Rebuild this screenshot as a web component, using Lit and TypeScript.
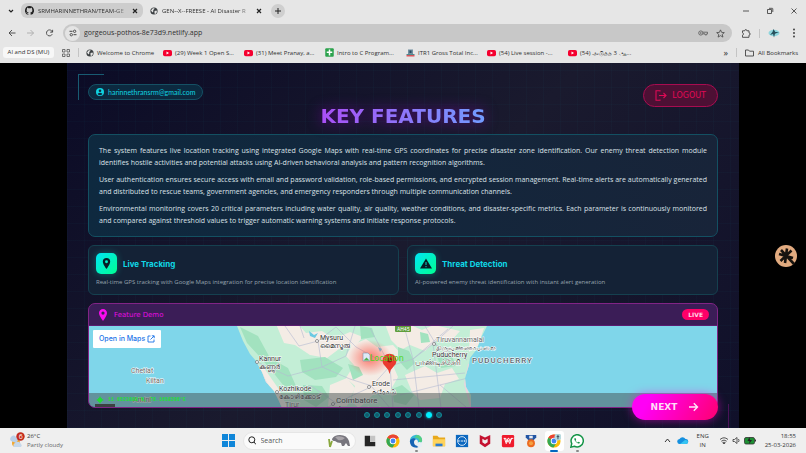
import { LitElement, html, css, svg } from "lit";
import { customElement } from "lit/decorators.js";
import { classMap } from "lit/directives/class-map.js";

const reset = css`
  * { box-sizing: border-box; }
  button, input, a { font: inherit; color: inherit; margin: 0; padding: 0; border: 0; background: none; text-decoration: none; outline: none; }
  button { display: inline-flex; align-items: center; justify-content: center; cursor: pointer; }
  svg { display: block; flex: none; }
  h1, h2, p { margin: 0; }
`;

const globe = html`<svg width="8" height="8" viewBox="0 0 16 16"><circle cx="8" cy="8" r="7.2" fill="#3c4043"/><path d="M2 7l3-4 4-1-1 3-2 1 1 2-2 3zM9 8l4-1 1 3-3 4-2-1z" fill="#e6e6e6"/></svg>`;
const youtube = html`<svg width="9" height="8" viewBox="0 0 18 16"><rect x="0" y="2" width="18" height="12.5" rx="3.5" fill="#f5002f"/><path d="M7 5.2v6l5-3z" fill="#fff"/></svg>`;
const sheets = html`<svg width="9" height="9" viewBox="0 0 18 18"><rect x=".5" y=".5" width="17" height="17" rx="2" fill="#2ba24c"/><path d="M9 3v12M3.500 8.500h11" stroke="#fff" stroke-width="3"/></svg>`;
const taxes = html`<svg width="9" height="8" viewBox="0 0 18 16"><path d="M4 1h10v9H4z" fill="#6f8fa0"/><path d="M7 3h4v5H7z" fill="#274b63"/><path d="M1 10h16v2H1z" fill="#4d8b8f"/><path d="M1 12h16v3H1z" fill="#d8545a"/></svg>`;
const tabClose = html`<svg width="8" height="8" viewBox="0 0 8 8"><path d="M2 2l4 4M6 2l-4 4" stroke="#222" stroke-width="1.200"/></svg>`;

const bookmarks = [
  { icon: globe, label: "Welcome to Chrome", first: true },
  { icon: youtube, label: "(29) Week 1 Open S..." },
  { icon: youtube, label: "(31) Meet Pranay, a..." },
  { icon: sheets, label: "Intro to C Program..." },
  { icon: taxes, label: "ITR1 Gross Total Inc..." },
  { icon: youtube, label: "(54) Live session -..." },
  { icon: youtube, label: "(54) அடுத்த 3 ஆ..." },
];

@customElement("browser-bar")
class BrowserBar extends LitElement {
  static styles = [reset, css`
    :host { display: block; background: #e6e6e6; color: #303030; font: 6px/10px "Open Sans", "Noto Sans", sans-serif; }
    .tabs { display: flex; align-items: center; height: 21px; padding: 0 8px 0 7px; }
    .menu { width: 8px; margin-right: 6px; }
    .tab { display: flex; align-items: center; gap: 4px; height: 15px; width: 122px; padding: 0 4px; border-radius: 6px; }
    .tab.idle { background: #cdcdcd; }
    .tab.current { padding: 0 2px 0 7px; }
    .tab .label { flex: 1; justify-content: flex-start; overflow: hidden; white-space: nowrap; min-width: 0; mask-image: linear-gradient(90deg, #000 84%, #0003); }
    .add { width: 14px; height: 14px; border-radius: 50%; background: #cfcfcf; margin-left: 6px; }
    .grow { flex: 1; }
    .window { display: flex; gap: 16px; }
    .tools { display: flex; align-items: center; height: 24px; padding: 0 8px; }
    .nav { display: flex; gap: 10px; padding-right: 9px; }
    .address { flex: 1; display: flex; align-items: center; height: 18px; border-radius: 9px; background: #c8c8c8; padding: 0 7px 0 2px; }
    .site { width: 15px; height: 15px; border-radius: 50%; background: #e4e4e4; }
    .address input { flex: 1; min-width: 0; margin: 0 4px; font-size: 7px; }
    .pair { display: flex; gap: 8px; }
    .right { display: flex; align-items: center; gap: 8px; padding-left: 9px; }
    .sep { width: 1px; height: 9px; background: #c4c4c4; }
    .marks { display: flex; align-items: center; height: 18px; padding: 0 8px 3px 3px; white-space: nowrap; }
    .chip { display: block; width: 51px; text-align: center; background: #f7f7f7; border-radius: 3px; height: 11px; }
    .apps { margin: 0 8px; }
    .mark { display: flex; align-items: center; gap: 3px; width: 81px; }
    .mark.first { width: 77px; margin-left: 7px; }
    .all { display: flex; align-items: center; gap: 4px; margin-left: 8px; }
    .more { margin-right: 8px; font-size: 9px; }
  `];
  render() {
    return html`
      <div class="tabs">
        <button class="menu" aria-label="Search tabs"><svg width="8" height="8" viewBox="0 0 8 8"><path d="M2 3l2 2 2-2" fill="none" stroke="#222" stroke-width="1.200"/></svg></button>
        <div class="tab idle">
          <svg width="9" height="9" viewBox="0 0 16 16"><path fill="#222" d="M8 0a8 8 0 0 0-2.500 15.600c.4.100.5-.2.5-.4v-1.500c-2.200.5-2.700-.9-2.700-.9-.4-.9-.9-1.200-.9-1.200-.7-.5.1-.5.1-.5.8.1 1.200.8 1.200.8.700 1.300 1.900.9 2.300.7.100-.5.3-.9.5-1.100-1.800-.2-3.600-.9-3.600-4 0-.8.3-1.600.8-2.100-.1-.2-.4-1 .1-2.100 0 0 .7-.2 2.200.8a7.500 7.500 0 0 1 4 0c1.500-1 2.200-.8 2.200-.8.4 1.100.2 1.900.1 2.100.5.500.8 1.300.8 2.100 0 3.100-1.900 3.800-3.700 4 .3.300.6.800.6 1.500v2.200c0 .2.100.5.500.4A8 8 0 0 0 8 0z"/></svg>
          <button class="label">SRMHARINNETHRAN/TEAM-GE</button>
          <button aria-label="Close tab">${tabClose}</button>
        </div>
        <div class="tab current">
          ${globe}
          <button class="label">GEN--X--FREESE - AI Disaster R</button>
          <button aria-label="Close tab">${tabClose}</button>
        </div>
        <button class="add" aria-label="New tab"><svg width="8" height="8" viewBox="0 0 8 8"><path d="M4 1v6M1 4h6" stroke="#222"/></svg></button>
        <span class="grow"></span>
        <div class="window">
          <button aria-label="Minimise"><svg width="8" height="8" viewBox="0 0 8 8"><path d="M1 4h6" stroke="#333" stroke-width=".8"/></svg></button>
          <button aria-label="Restore"><svg width="8" height="8" viewBox="0 0 8 8"><path d="M1.500 2.500h4v4h-4zM3 1.300h3.200q.6 0 .6.600V5" fill="none" stroke="#333" stroke-width=".8"/></svg></button>
          <button aria-label="Close"><svg width="8" height="8" viewBox="0 0 8 8"><path d="M1.500 1.500l5 5M6.500 1.500l-5 5" stroke="#333" stroke-width=".8"/></svg></button>
        </div>
      </div>
      <div class="tools">
        <div class="nav">
          <button aria-label="Back"><svg width="8" height="8" viewBox="0 0 8 8"><path d="M7.500 4H1M4 1L1 4l3 3" fill="none" stroke="#444" stroke-width=".9"/></svg></button>
          <button aria-label="Forward"><svg width="9" height="8" viewBox="0 0 8 8"><path d="M.5 4H7M4 1l3 3-3 3" fill="none" stroke="#aaa" stroke-width=".9"/></svg></button>
          <button aria-label="Reload"><svg width="9" height="8" viewBox="0 0 9 8"><path d="M7.200 5.200A3 3 0 1 1 6.800 2L7.500 3M7.600.8V3.200H5.200" fill="none" stroke="#444" stroke-width=".9"/></svg></button>
        </div>
        <div class="address">
          <button class="site" aria-label="Site information"><svg width="8" height="8" viewBox="0 0 8 8"><path d="M.5 2.300h3M4.500 5.700h3" stroke="#444"/><circle cx="5.600" cy="2.300" r="1.200" fill="none" stroke="#444" stroke-width=".9"/><circle cx="2.300" cy="5.700" r="1.200" fill="none" stroke="#444" stroke-width=".9"/></svg></button>
          <input aria-label="Address" value="gorgeous-pothos-8e73d9.netlify.app">
          <div class="pair">
            <button aria-label="Passwords"><svg width="10" height="8" viewBox="0 0 10 8"><circle cx="2.800" cy="4" r="2.100" fill="none" stroke="#555" stroke-width=".8"/><circle cx="2.800" cy="4" r=".8" fill="#555"/><path d="M5 3.200h4.500v1.600h-.8v1.100H7V4.800H5" fill="none" stroke="#555" stroke-width=".8"/></svg></button>
            <button aria-label="Bookmark"><svg width="9" height="9" viewBox="0 0 16 16"><path d="M8 1.500l2 4.500 4.800.4-3.700 3.200 1.200 4.800L8 11.800l-4.300 2.600 1.200-4.800L1.200 6.400 6 6z" fill="none" stroke="#444" stroke-width="1.400"/></svg></button>
          </div>
        </div>
        <div class="right">
          <button aria-label="Extensions"><svg width="10" height="9" viewBox="0 0 10 9"><path d="M1.500 1.800h2.200q.2-1.300 1.100-1.300t1.100 1.300H8v2.100q1.300.2 1.300 1.100T8 6.100v2.200H1.500V6.200q1-.3 1-1.200t-1-1.200z" fill="none" stroke="#444" stroke-width=".9"/></svg></button>
          <span class="sep"></span>
          <button aria-label="Profile"><svg width="12" height="10" viewBox="0 0 12 10"><ellipse cx="6" cy="5" rx="5.500" ry="3.200" fill="#8fd6de"/><path d="M5.500 1l1.800 3L11 4 7 5.800 6 9.500 5 6 2 7l2.500-3z" fill="#27505c"/></svg></button>
          <button aria-label="Menu"><svg width="10" height="10" viewBox="0 0 10 10"><g fill="#333"><circle cx="6" cy="1.500" r=".9"/><circle cx="6" cy="5" r=".9"/><circle cx="6" cy="8.500" r=".9"/></g></svg></button>
        </div>
      </div>
      <div class="marks">
        <a class="chip" href="#">AI and DS (MU)</a>
        <svg class="apps" width="8" height="8" viewBox="0 0 8 8"><path d="M.5.5h2.500v2.500H.5zM5 .5h2.500v2.500H5zM.5 5h2.500v2.500H.5zM5 5h2.500v2.500H5z" fill="none" stroke="#555" stroke-width=".8"/></svg>
        <span class="sep"></span>
        ${bookmarks.map((b) => html`<a href="#" class=${classMap({ mark: true, first: !!b.first })}>${b.icon}<span>${b.label}</span></a>`)}
        <span class="grow"></span>
        <button class="more" aria-label="More bookmarks">»</button>
        <span class="sep"></span>
        <a class="all" href="#"><svg width="9" height="8" viewBox="0 0 9 8"><path d="M.5 1h3l1 1.200h4V7h-8z" fill="none" stroke="#444" stroke-width=".9"/></svg>All Bookmarks</a>
      </div>`;
  }
}

const places = [
  { x: 320, y: 340, name: "Mysuru", local: "മൈസൂരു", dot: [317, 341] },
  { x: 259, y: 361, name: "Kannur", local: "കണ്ണൂർ", dot: [257, 362] },
  { x: 279, y: 391, name: "Kozhikode", local: "കോഴിക്കോട്", dot: [277, 392] },
  { x: 372, y: 386, name: "Erode", local: "ஈரோடு", dot: [369, 387] },
  { x: 436, y: 342, name: "Tiruvannamalai", local: "திருவண்ணாமலை", dot: [434, 344], soft: true },
];

@customElement("feature-map")
class FeatureMap extends LitElement {
  static styles = [reset, css`
    :host { display: block; position: relative; overflow: hidden; background: #7fd6ea; border-radius: 0 0 6px 6px; }
    .map { width: 100%; height: 81px; }
    text { font-family: Roboto, "Noto Sans", sans-serif; font-size: 7px; fill: #333; stroke: #fff; stroke-width: 1px; paint-order: stroke; }
    .soft { fill: #666; }
    .city { font-size: 8px; }
    .region { fill: #5c6670; font-size: 8px; font-weight: 500; letter-spacing: 1px; }
    .road { fill: #fff; font-size: 5px; stroke: none; }
    .alt { fill: #4fd61c; font-family: "DejaVu Sans", sans-serif; font-size: 8px; stroke: none; }
    .open { position: absolute; left: 4px; top: 4px; height: 18px; padding: 0 6px; display: flex; align-items: center; gap: 2px; background: #fff; border-radius: 1px; color: #1a73e8; font: 500 7px/18px Inter, sans-serif; }
    .coords { position: absolute; left: 0; right: 0; bottom: 0; height: 14px; padding-left: 7px; display: flex; align-items: center; gap: 4px; background: #46505080; color: #20e035; font: bold 5px/14px "Liberation Mono", monospace; }
  `];
  render() {
    return html`
      <svg class="map" viewBox="89 326 628 81" preserveAspectRatio="xMidYMid slice" role="img" aria-label="Map of southern India">
        <defs>
          <radialGradient id="glow"><stop offset="0" stop-color="#ff2a1a" stop-opacity=".6"/><stop offset="1" stop-color="#ff2a1a" stop-opacity="0"/></radialGradient>
          <clipPath id="land"><path d="M237 326L243 341 250 354 256 361 262 372 266 382 274 391 279 401 282 408H471L471 395 466 387 465 378 469 365 470 358 477 349 481 338 487 326z"/></clipPath>
        </defs>
        <g clip-path="url(#land)">
          <rect x="230" y="320" width="270" height="90" fill="#c3eed6"/>
          <g fill="#f4ece5">
            <path d="M276 324l22 0 8 9 16-2 12 8 16-7 13 5-8 9-16 3-12 9-17-3-15-10-11-2z"/>
            <path d="M352 345l14-6 11 8 16-2 8 9-9 9 6 14-8 14-17 4-14 13-8-7 4-15-9-8 8-13-8-9z"/>
            <path d="M385 324l23 0 14 6 12-5 26 6-8 9-16 1-11 10-15-6-9 5-10-10z"/>
            <path d="M405 375l20-9 12 7 15-5 7 11-14 5-5 14-20 2-8-8z"/>
            <path d="M255 368l9 0 14 20 10 20-10 0z"/><path d="M330 385l17-7 8 10-8 18-19 1z"/>
            <path d="M470 330l14-2-6 18-9 6z"/>
          </g>
          <g fill="#a2e2bf">
            <path d="M240 327l18 9 12 22 18 10 8 18-9 4-15-19-13-15-12-13z"/>
            <path d="M300 360l25-3 18 11-7 9-21 3-13-8z"/><path d="M348 364l11 3 4 8-10 5z"/>
            <path d="M398 347l11 4 6 12-8 7-9-10z"/><path d="M360 326l12 2 3 9-14 2z"/>
            <path d="M303 385l19 1 7 11-13 10-12-7z"/><path d="M436 353l16 3 4 10-15 2z"/><path d="M392 389l10-4 12 10-8 10-12-3z"/><path d="M420 332l8 2 2 8-9 1z"/>
          </g>
          <g fill="none" stroke="#b3bad2" stroke-width=".6">
            <path d="M285 326l14 20 19-5 18-14M318 341l4 26 28 12 22 7M336 327l20 20 34 19 23-7 35-30M390 366l-19 21-35 16-10 5M372 387l18 21M390 366l3 42M413 359l20-15 34 16M413 359l6 49M433 344l20-18M413 359l-9-33M433 344l8 64M393 380l72-7M400 395l68-17M257 362l31 14 34-9M277 392l34-6 25 17M390 366l-20-38M425 326l12 20M440 385l26 22M355 326l-9 30-24 11M300 326l4 12"/>
          </g>
          <path d="M309 331l5 4 4-2-3 5-5-2zM378 347l4 2-2 3z" fill="#6bc9e2"/>
          <g fill="none" stroke="#e7d5df" stroke-width="2"><path d="M257 364l8 17 16 26M469 364l-4 20 6 23"/></g>
        </g>
        <rect x="395" y="325" width="16" height="7" rx="1" fill="#5f9d3c"/><text class="road" x="397" y="331">AH45</text>
        <ellipse cx="370" cy="358" rx="22" ry="18" fill="url(#glow)"/>
        ${places.map((p) => svg`
          <circle cx=${p.dot[0]} cy=${p.dot[1]} r="1.500" fill="#fff" stroke="#555" stroke-width=".6"/>
          <text class=${p.soft ? "soft" : ""} x=${p.x} y=${p.y}>${p.name}</text>
          <text class=${p.soft ? "soft" : ""} x=${p.x} y=${p.y + 8}>${p.local}</text>`)}
        <text class="soft" x="131" y="373">Chetlat</text><text class="soft" x="146" y="383">Kiltan</text><text class="soft" x="133" y="402">Amini</text>
        <text x="432" y="357">Puducherry</text><text class="city" x="415" y="365">பாண்டிச்சேரி</text>
        <text class="region" x="472" y="363">PUDUCHERRY</text>
        <circle cx="333" cy="404" r="1.500" fill="#fff" stroke="#555" stroke-width=".6"/>
        <text class="city" x="336" y="403">Coimbatore</text><text x="336" y="411">கோயம்புத்தூர்</text><text class="soft" x="285" y="407">Tirur</text>
        <path d="M363 353h5l2 2v6h-7z" fill="#dfe9f7" stroke="#7f93ad" stroke-width=".6"/><path d="M363.500 360.500l3-3 3 3z" fill="#4fae4f"/>
        <path d="M389.500 374q-1-5-4.500-8a7 7 0 1 1 9 0q-3.500 3-4.500 8z" fill="#ea3a2f"/><circle cx="389.500" cy="360" r="2.500" fill="#a3180f"/>
        <text class="alt" x="370" y="361">Location</text>
        <path d="M95 404h20v4H95z" fill="#333"/>
      </svg>
      <a class="open" href="#">Open in Maps<svg width="8" height="8" viewBox="0 0 8 8"><path d="M3.500 1H1v6h6V4.500M4.800.8h2.400v2.400M7 1L3.500 4.500" fill="none" stroke="#1a73e8" stroke-width=".9"/></svg></a>
      <div class="coords"><svg width="8" height="8" viewBox="0 0 8 8"><path d="M4 0l1.200 2.800L8 4 5.200 5.200 4 8 2.800 5.200 0 4l2.800-1.200z" fill="#20dc35"/><circle cx="4" cy="4" r="2.300" fill="#20dc35"/></svg>11.6523888°N, 78.1658286°E</div>`;
  }
}

const chrome = svg`<circle cx="8" cy="8" r="7.500" fill="#fbbc05"/><path d="M8 8L1.500 4.200A7.500 7.500 0 0 1 14.500 4.200z" fill="#ea4335"/><path d="M8 8L1.500 4.200A7.500 7.500 0 0 0 7.500 15.500L11 9.800z" fill="#34a853"/><circle cx="8" cy="8" r="3.700" fill="#fff"/><circle cx="8" cy="8" r="2.800" fill="#4285f4"/>`;
const apps = [
  { name: "Task view", art: svg`<path d="M2 2h6v7h6v5H2z" fill="#262626"/><path d="M8 2h6v7H8z" fill="#c4c4c4"/>` },
  { name: "Chrome", art: chrome },
  { name: "Edge", running: true, art: svg`<path d="M1 9a7 7 0 0 1 14-2c0 3-3 4-5 3 1-2-1-4-3-4-3 0-5 2-6 3z" fill="#35b8d8"/><path d="M1 8c1-3 5-4 7-2-3 1-3 6 0 7 2 1 4 0 5-1-1 3-4 4-6 3.500C3 15 1 12 1 8z" fill="#1764b4"/><path d="M9 1c4 0 6 3 6 6 0 2-2 3-4 3 2-4-1-6-5-6z" fill="#53cf83"/><circle cx="12" cy="12" r="3" fill="#e6eef5"/>` },
  { name: "Files", art: svg`<path d="M1 2h5l2 2h7v10H1z" fill="#e8a91c"/><path d="M1 6h14v8H1z" fill="#ffd35a"/><path d="M4 11h8v3H4z" fill="#2c7bd1"/>` },
  { name: "Dell", art: svg`<rect x="1" y="1" width="14" height="14" fill="#0b68c0"/><circle cx="8" cy="8" r="5" fill="none" stroke="#fff" stroke-width=".9"/><path d="M4.500 7v2M6.500 8h3M11 7v2" stroke="#fff"/>` },
  { name: "McAfee", art: svg`<path d="M2 1l6 3 6-3v10l-6 4-6-4z" fill="#c41230"/><path d="M5 5.500l3 1.700 3-1.700v4L8 11.400 5 9.500z" fill="#eee"/>` },
  { name: "WPS", art: svg`<rect x="1" y="1" width="14" height="14" rx="1.500" fill="#ef1b2d"/><path d="M3 5h2.500l1 4L8 5h1l1.500 4 1-4H14M4 5l2 6 2-4 2 4 2-6" fill="none" stroke="#fff" stroke-width="1.100"/>` },
  { name: "Rewards", art: svg`<path d="M2 1h12v3l-4 4H6L2 4z" fill="#2356a4"/><path d="M6 2h4v3H6z" fill="#e7ecf4"/><circle cx="8" cy="10.500" r="4.500" fill="#ec6a20"/><circle cx="8" cy="10.500" r="2.300" fill="#f5a142"/>` },
  { name: "Chrome window", active: true, art: svg`${chrome}<circle cx="12.500" cy="3.500" r="4" fill="#b7dade"/><path d="M12.500 1v5M11 3h3" stroke="#345"/>` },
  { name: "WhatsApp", running: true, art: svg`<path d="M1 15l1-4A7 7 0 1 1 5 14z" fill="#fff" stroke="#159548" stroke-width="1.700"/><path d="M5.500 4.500q-1.300 1 0 3 1.500 2.500 3.700 3.300 2 .5 2.300-1l-2-1-.8.9q-1.500-.6-2.300-2.200l.7-.8-.9-2z" fill="#159548"/>` },
];

@customElement("task-bar")
class TaskBar extends LitElement {
  static styles = [reset, css`
    :host { display: grid; grid-template-columns: 1fr auto 1fr; align-items: center; height: 25px; padding: 0 10px; background: #efefef; color: #333; font: 6px/9px "Open Sans", "Noto Sans", sans-serif; }
    .weather { display: flex; align-items: center; gap: 2px; }
    .muted { color: #666; }
    .center { display: flex; align-items: center; padding-left: 4px; }
    .search { display: flex; align-items: center; width: 113px; height: 18px; border-radius: 9px; background: #fafafa; padding: 0 4px; margin: 0 3px 0 8px; border: 1px solid #e6e6e6; gap: 5px; }
    .search input { flex: 1; min-width: 0; font-size: 7px; }
    .search input::placeholder { color: #555; opacity: 1; }
    .app { width: 19px; height: 20px; margin: 0 2px; border-radius: 3px; position: relative; }
    .app.active { background: #fff; }
    .app.active::after, .app.running::after { content: ""; position: absolute; bottom: -1px; width: 3px; height: 2px; border-radius: 1px; background: #888; }
    .app.active::after { width: 8px; background: #0067c0; }
    .tray { display: flex; align-items: center; justify-content: flex-end; gap: 6px; text-align: right; }
    .lang { text-align: center; width: 16px; }
    .status { display: flex; gap: 3px; margin: 0 3px 0 2px; }
  `];
  render() {
    return html`
      <div class="weather">
        <svg width="15" height="17" viewBox="0 0 15 17"><circle cx="6" cy="11" r="4" fill="#f4a72c"/><path d="M1 9a3 3 0 0 1 5-4l2 3-2 3z" fill="#b9cfe8"/><path d="M4 15a2.500 2.500 0 0 1 1-4 3.500 3.500 0 0 1 6 1 2 2 0 0 1 0 3z" fill="#c5d7ea"/><circle cx="10.500" cy="4.500" r="4.200" fill="#c42b1c"/><text x="8.800" y="7" font-size="7" fill="#fff">6</text></svg>
        <div>26°C<div class="muted">Partly cloudy</div></div>
      </div>
      <div class="center">
        <button aria-label="Start"><svg width="13" height="13" viewBox="0 0 13 13"><path d="M0 0h6v6H0zM7 0h6v6H7zM0 7h6v6H0zM7 7h6v6H7z" fill="#0f86d9"/></svg></button>
        <label class="search">
          <svg width="8" height="9" viewBox="0 0 8 9"><circle cx="3.800" cy="3.800" r="3" fill="none" stroke="#222"/><path d="M6 6l2 2.500" stroke="#222"/></svg>
          <input placeholder="Search" aria-label="Search">
          <svg width="24" height="15" viewBox="0 0 24 15"><path d="M2 6l1 8M5 8l-2 6" stroke="#8aa83e" stroke-width="1.800"/><path d="M5 6q2-4 8-4 7 0 9 6l1 5h-2l-2-3-2 3h-2l-1-3q-4 0-6-2-3 0-3-2z" fill="#77757d"/><path d="M8 4q5-2 10 1-3 3-7 2z" fill="#a9a5aa"/></svg>
        </label>
        ${apps.map((a) => html`<button aria-label=${a.name} class=${classMap({ app: true, active: !!a.active, running: !!a.running })}><svg width="14" height="14" viewBox="0 0 16 16">${a.art}</svg></button>`)}
      </div>
      <div class="tray">
        <svg width="7" height="7" viewBox="0 0 7 7"><path d="M1 5l2.500-3L6 5" fill="none" stroke="#333"/></svg>
        <svg width="12" height="9" viewBox="0 0 12 9"><path d="M3 8a2.500 2.500 0 0 1-.5-5 3.500 3.500 0 0 1 6 0 2.500 2.500 0 0 1 .5 5z" fill="#1490df"/><path d="M3 8l5-4q3 0 3 2t-2 2z" fill="#36c4f2"/></svg>
        <div class="lang">ENG<br>IN</div>
        <div class="status">
          <svg width="10" height="9" viewBox="0 0 10 9"><path d="M1 3.500q4-3.500 8 0M2.300 5.200q2.700-2.300 5.400 0M3.700 6.700q1.300-1 2.600 0L5 8z" fill="none" stroke="#444" stroke-width=".9"/></svg>
          <svg width="9" height="9" viewBox="0 0 9 9"><path d="M1 3.500h1.500L5 1.500v6L2.500 5.500H1zM6.500 3q1 1.500 0 3" fill="none" stroke="#444" stroke-width=".9"/></svg>
          <svg width="12" height="9" viewBox="0 0 12 9"><rect x=".5" y="1.500" width="10" height="6.500" rx="1.500" fill="#1d8f33" stroke="#333" stroke-width=".8"/><path d="M11.500 3.500v2" stroke="#333"/><path d="M5.500 1l-2 4h2l-.5 3 3-4H6z" fill="#222"/></svg>
        </div>
        <div>18:55<br>25-03-2026</div>
      </div>`;
  }
}

const pin = (size: number, color: string) => html`<svg width=${size} height=${size} viewBox="0 0 12 12"><path fill=${color} fill-rule="evenodd" d="M6 0a4 4 0 0 1 4 4.100C10 7 6 12 6 12S2 7 2 4.100A4 4 0 0 1 6 0zm0 2.500a1.600 1.600 0 1 0 0 3.200 1.600 1.600 0 0 0 0-3.200z"/></svg>`;

const cards = [
  { title: "Live Tracking", text: "Real-time GPS tracking with Google Maps integration for precise location identification", icon: pin(11, "#061c26") },
  { title: "Threat Detection", text: "AI-powered enemy threat identification with instant alert generation", icon: html`<svg width="12" height="11" viewBox="0 0 12 11"><path d="M6 .5L12 10.500H0z" fill="#061c26"/><path d="M6 4v3M6 8v1.200" stroke="#08d5c4"/></svg>` },
];
const paragraphs = [
  "The system features live location tracking using integrated Google Maps with real-time GPS coordinates for precise disaster zone identification. Our enemy threat detection module identifies hostile activities and potential attacks using AI-driven behavioral analysis and pattern recognition algorithms.",
  "User authentication ensures secure access with email and password validation, role-based permissions, and encrypted session management. Real-time alerts are automatically generated and distributed to rescue teams, government agencies, and emergency responders through multiple communication channels.",
  "Environmental monitoring covers 20 critical parameters including water quality, air quality, weather conditions, and disaster-specific metrics. Each parameter is continuously monitored and compared against threshold values to trigger automatic warning systems and initiate response protocols.",
];

@customElement("app-root")
class AppRoot extends LitElement {
  static styles = [reset, css`
    :host { display: flex; flex-direction: column; min-height: 100vh; font-family: "Open Sans", Roboto, sans-serif; }
    .stage { flex: 1; position: relative; padding: 0 67px; background: #000; }
    .page { position: relative; min-height: 100%; padding: 21px 21px 10px; overflow: hidden;
      background: repeating-linear-gradient(0deg, #00f0ff05 0 1px, transparent 1px 17px), repeating-linear-gradient(90deg, #00f0ff05 0 1px, transparent 1px 17px), linear-gradient(135deg, #0b0b26 0%, #1a1a2e 50%, #10102a 100%); }
    .corner { position: absolute; left: 11px; top: 11px; width: 26px; height: 26px; border: solid #185b72; border-width: 1px 0 0 1px; }
    .corner.end { left: auto; top: auto; right: 10px; bottom: -2px; border-color: #4a1259; border-width: 0 1px 1px 0; }
    .top { display: flex; justify-content: space-between; align-items: flex-start; }
    .user { display: flex; align-items: center; gap: 4px; height: 16px; padding: 0 7px; border: 1px solid #155064; border-radius: 8px; background: #0c2a40; color: #10d3e0; font: 7px/14px Lato, sans-serif; }
    .logout { gap: 5px; height: 23px; padding: 0 11px; border: 1px solid #a80c50; border-radius: 12px; background: #4d1034; color: #e00a56; font: 8px/14px "DejaVu Sans", sans-serif; }
    h1 { width: max-content; margin: 0 auto 9px; font: bold 20px/18px "DejaVu Sans", sans-serif; color: transparent; background: linear-gradient(90deg, #aa4ff5, #719cff); background-clip: text; filter: drop-shadow(0 0 7px #a000d088); }
    .intro { display: grid; gap: 5px; padding: 10px 10px 9px; border: 1px solid #135062; border-radius: 7px; background: linear-gradient(90deg, #0e293f, #182439); color: #dce2e8; font-size: 7px; line-height: 12px; text-align: justify; }
    .cards { display: grid; grid-template-columns: 1fr 1fr; gap: 8px; margin: 8px 0; }
    .card { height: 50px; padding: 7px; border: 1px solid #15404f; border-radius: 6px; background: #142236; }
    .name { display: flex; align-items: center; gap: 6px; }
    .badge { display: grid; place-items: center; width: 21px; height: 21px; border-radius: 5px; background: linear-gradient(135deg, #00e5f5, #00ff91); box-shadow: 0 0 7px #00e8d055; }
    h2 { color: #10d8e6; font: bold 8px/12px Inter, sans-serif; }
    .card p { margin-top: 3px; color: #97a2ad; font-size: 6px; line-height: 10px; }
    .demo { border: 1px solid #812486; border-radius: 7px; background: #3b1d57; }
    .bar { display: flex; align-items: center; justify-content: space-between; height: 22px; padding: 0 8px; border-bottom: 1px solid #5b1c70; }
    .label { display: flex; align-items: center; gap: 5px; color: #e30ce0; font: 7px/12px "DejaVu Sans", sans-serif; }
    .live { height: 11px; padding: 0 6px; border-radius: 6px; background: #ff0068; color: #ffd3e4; font: bold 6px/11px "DejaVu Sans", sans-serif; }
    .dots { display: flex; justify-content: space-between; width: 79px; margin: 4px auto 0; }
    .dot { width: 6px; height: 6px; border-radius: 50%; border: 1px solid #0f8c98; background: #145a6b; }
    .dot.on { background: #00f0ff; border-color: #00f0ff; box-shadow: 0 0 3px #00f0ff; }
    .next { position: absolute; right: 21px; bottom: 8px; width: 86px; height: 26px; gap: 11px; border-radius: 13px; background: linear-gradient(120deg, #ff00f5 20%, #ff0070); color: #ffdcf8; box-shadow: 0 0 10px #ff00dd88; font: bold 9px/12px "DejaVu Sans", sans-serif; }
    .assist { position: absolute; right: 9px; top: 182px; }
  `];
  render() {
    return html`
      <browser-bar></browser-bar>
      <div class="stage">
        <main class="page">
          <div class="corner"></div><div class="corner end"></div>
          <div class="top">
            <div class="user"><svg width="8" height="8" viewBox="0 0 16 16"><circle cx="8" cy="8" r="8" fill="#10d3e0"/><circle cx="8" cy="5.500" r="2.600" fill="#0c2a40"/><path d="M3 12q5-5 10 0-5 5-10 0z" fill="#0c2a40"/></svg>harinnethransrm@gmail.com</div>
            <button class="logout"><svg width="12" height="11" viewBox="0 0 12 11"><path d="M5 1.500V.8H1v9.400h4v-.7M4 5.500h7M8.500 3L11 5.500 8.500 8" fill="none" stroke="#e00a56" stroke-width="1.100"/></svg>LOGOUT</button>
          </div>
          <h1>KEY FEATURES</h1>
          <section class="intro">${paragraphs.map((p) => html`<p>${p}</p>`)}</section>
          <section class="cards">${cards.map((c) => html`
            <article class="card"><div class="name"><span class="badge">${c.icon}</span><h2>${c.title}</h2></div><p>${c.text}</p></article>`)}
          </section>
          <section class="demo">
            <div class="bar"><div class="label">${pin(12, "#fa0cf0")}Feature Demo</div><span class="live">LIVE</span></div>
            <feature-map></feature-map>
          </section>
          <nav class="dots" aria-label="Slides">${[0, 1, 2, 3, 4, 5, 6, 7].map((i) => html`<button aria-label=${`Slide ${i + 1}`} class=${classMap({ dot: true, on: i === 6 })}></button>`)}</nav>
          <button class="next">NEXT<svg width="11" height="10" viewBox="0 0 11 10"><path d="M1 5h8.500M5.800 1.200L9.500 5 5.800 8.800" fill="none" stroke="#ffe6fa" stroke-width="1.400"/></svg></button>
        </main>
        <button class="assist" aria-label="Assistant"><svg width="22" height="22" viewBox="0 0 22 22"><circle cx="11" cy="11" r="11" fill="#e2ab80"/><path d="M12 3.500L10 18M4 9l14 4M5.500 16L16.500 5.500M6 5l13 14" stroke="#17130f" stroke-width="2.600"/></svg></button>
      </div>
      <task-bar></task-bar>`;
  }
}
